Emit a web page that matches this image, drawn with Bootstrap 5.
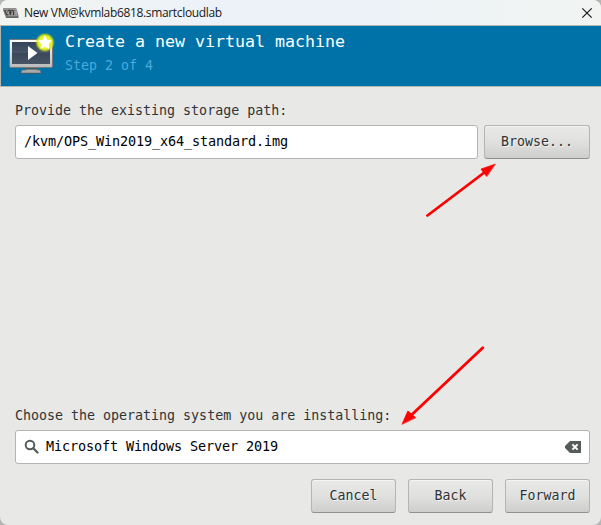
<!DOCTYPE html>
<html lang="en">
<head>
<meta charset="utf-8">
<meta name="viewport" content="width=device-width, initial-scale=1">
<title>New VM</title>
<link rel="stylesheet" href="https://cdn.jsdelivr.net/npm/bootstrap@5.3.0/dist/css/bootstrap.min.css">
<style>
body{background:#b5b5b5;font-family:"DejaVu Sans Mono",monospace;font-size:13.3px;line-height:16px;color:#2e3436}
.window{width:601px;height:525px;background:#e8e8e6;border-radius:8px}
.titlebar{height:25px;padding:0 8px 0 3px;background:linear-gradient(90deg,#f2f4f1,#ecf2f8 35%,#ecf2f8 60%,#f1f4f1);font-family:"Open Sans",sans-serif;font-size:12px;color:#191919}
.caption-text{margin-left:5px;letter-spacing:-.34px;line-height:20px;white-space:nowrap}
.banner{height:62px;background:#0072a8;border:1px solid #b2b6b3;border-right:0;padding-left:7px}
.banner-text{margin-left:8px;padding-top:6px}
.banner h1{font-size:16.61px;line-height:20px;color:#fff}
.step{color:#4ba9dc;margin-top:6px}
.content{padding:16px 11px 12px 15px}
.field-label{height:16px;margin-bottom:6px}
.entry{height:34px;padding:0 8px 2px;border:1px solid #b4b4b2;border-radius:3px;font-size:13.5px;letter-spacing:-.128px;line-height:22px;color:#000;background:#fff}
.entry svg{margin-top:1px}
.btn-gtk{width:85px;height:34px;padding:0 0 1px;font-size:13.26px;line-height:16px;color:#2e3436;border:1px solid #b4b4b2;border-bottom-color:#8f918e;border-radius:3px;background:linear-gradient(#e9e9e8,#e0e0df 50%,#cececd);box-shadow:inset 0 1px #f5f5f5;text-shadow:1px 1px #f2f2f2}
.btn-browse{width:106px}
.row-gap{gap:6px}
.action-gap{gap:12px;margin-top:15px}
.search-icon{margin-right:7px}
</style>
<script src="https://cdn.jsdelivr.net/npm/bootstrap@5.3.0/dist/js/bootstrap.bundle.min.js"></script>
</head>
<body class="overflow-hidden">
<main class="window d-flex flex-column position-relative overflow-hidden">
  <header class="titlebar d-flex align-items-center flex-shrink-0">
    <svg width="16" height="10" viewBox="0 0 16 10" aria-hidden="true"><path d="M0 0h13l1 2 1.5 6v2H3L0 2z" fill="#787878"/><path d="M0 1h13l1 7H3" fill="none" stroke="#aaa"/><path d="M2 2.5l2 4 2-4 2 4V3h2l1 4" fill="none" stroke="#3d3838" stroke-width="1.4"/><path d="M3 3l2 3 1-3M9 3v4M12 3v4" fill="none" stroke="#d4cbcb" stroke-width=".8"/><path d="M3 9h12" stroke="#555"/></svg>
    <span class="caption-text">New VM@kvmlab6818.smartcloudlab</span>
    <svg class="ms-auto" width="12" height="12" viewBox="0 0 12 12" role="img" aria-label="Close"><path d="M1.3 1.3l9.4 9.4M10.7 1.3l-9.4 9.4" stroke="#151515" stroke-width="1.15"/></svg>
  </header>
  <section class="banner d-flex flex-shrink-0">
    <svg width="49" height="60" viewBox="8 26 49 60" aria-hidden="true">
      <defs>
        <linearGradient id="frame" x2="0" y2="1"><stop stop-color="#fff"/><stop offset="1" stop-color="#b9b9b9"/></linearGradient>
        <linearGradient id="screen" x2="0" y2="1"><stop stop-color="#344459"/><stop offset=".48" stop-color="#465468"/><stop offset=".52" stop-color="#3b4859"/><stop offset="1" stop-color="#475467"/></linearGradient>
        <radialGradient id="glow"><stop stop-color="#f7ff42"/><stop offset=".7" stop-color="#e2ed20"/><stop offset="1" stop-color="#b9d900" stop-opacity="0"/></radialGradient>
      </defs>
      <ellipse cx="31" cy="73" rx="11" ry="1.2" fill="#333" opacity=".5"/>
      <path d="M26 67h11v3h3l1 3H21l1-3h4z" fill="#a7a9aa" stroke="#6d7275" stroke-width=".7"/>
      <path d="M26 68h11v1.5H26z" fill="#4d5357"/>
      <rect x="9.5" y="39.5" width="43" height="28" rx="1.3" fill="url(#frame)" stroke="#777a7d"/>
      <rect x="12" y="42" width="38" height="22" fill="url(#screen)"/>
      <path d="M28 46l9.5 7-9.5 7z" fill="#fff"/>
      <circle cx="45" cy="42.5" r="10" fill="url(#glow)"/>
      <path d="M45 36.3l2 3.8 4.3.7-3 3.2.6 4.4-3.9-1.9-4 1.9.7-4.4-3.1-3.2 4.3-.7z" fill="#fff" stroke="#fff" stroke-width=".8" stroke-linejoin="round"/>
    </svg>
    <div class="banner-text"><h1 class="fw-normal m-0">Create a new virtual machine</h1><div class="step">Step 2 of 4</div></div>
  </section>
  <form class="content d-flex flex-column flex-grow-1">
    <div class="field-label">Provide the existing storage path:</div>
    <div class="d-flex row-gap">
      <div class="form-control entry d-flex align-items-center flex-grow-1">/kvm/OPS_Win2019_x64_standard.img</div>
      <button type="button" class="btn btn-gtk btn-browse flex-shrink-0">Browse...</button>
    </div>
    <div class="field-label mt-auto">Choose the operating system you are installing:</div>
    <div class="form-control entry d-flex align-items-center">
      <svg class="search-icon flex-shrink-0" width="15" height="15" viewBox="0 0 15 15" aria-hidden="true"><circle cx="6" cy="6" r="4.3" fill="none" stroke="#555d5c" stroke-width="2"/><path d="M9.3 9.3l4.2 4.2" stroke="#555d5c" stroke-width="2.3" stroke-linecap="round"/></svg>
      <span class="flex-grow-1">Microsoft Windows Server 2019</span>
      <svg class="flex-shrink-0" width="16" height="12" viewBox="0 0 16 12" role="img" aria-label="Clear"><path d="M5 0h11v12H5L0 7V5z" fill="#555d5c"/><path d="M7.4 3.4l5.2 5.2M12.6 3.4L7.4 8.6" stroke="#fff" stroke-width="2"/></svg>
    </div>
    <div class="d-flex justify-content-end action-gap">
      <button type="button" class="btn btn-gtk">Cancel</button>
      <button type="button" class="btn btn-gtk">Back</button>
      <button type="button" class="btn btn-gtk">Forward</button>
    </div>
  </form>
  <svg class="position-absolute top-0 start-0 pe-none" width="601" height="525" viewBox="0 0 601 525" aria-hidden="true">
    <g stroke="#f00" stroke-width="2.8" stroke-linecap="round" fill="#f00"><path d="M427.5 215.5L485 172M482.8 347.8L412 414.5"/><g stroke-width=".7" stroke-linejoin="round"><path d="M495 164.2L481 169l2.4 3.5 3.2 3.8z"/><path d="M402.1 424l5.7-13 3.4 2.6 4.2 4z"/></g></g>
  </svg>
</main>
</body>
</html>
